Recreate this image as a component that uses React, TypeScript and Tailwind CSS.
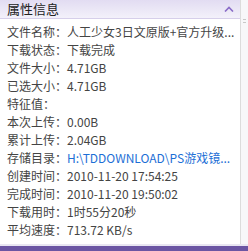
import React from "react";

const rows: { label: string; value: string; link?: boolean }[] = [
  { label: "文件名称：", value: "人工少女3日文原版+官方升级..." },
  { label: "下载状态：", value: "下载完成" },
  { label: "文件大小：", value: "4.71GB" },
  { label: "已选大小：", value: "4.71GB" },
  { label: "特征值：", value: "" },
  { label: "本次上传：", value: "0.00B" },
  { label: "累计上传：", value: "2.04GB" },
  { label: "存储目录：", value: "H:\\TDDOWNLOAD\\PS游戏镜...", link: true },
  { label: "创建时间：", value: "2010-11-20 17:54:25" },
  { label: "完成时间：", value: "2010-11-20 19:50:02" },
  { label: "下载用时：", value: "1时55分20秒" },
  { label: "平均速度：", value: "713.72 KB/s" },
];

export default function App() {
  return (
    <div
      className="w-[248px] h-[251px] bg-white flex flex-col overflow-hidden"
      style={{ fontFamily: '"Noto Sans CJK SC", "Noto Sans", sans-serif' }}
    >
      <div className="flex flex-1 min-h-0">
        <div className="w-[240px] flex flex-col">
          <div className="h-[19px] flex items-center justify-between pl-[7px] pr-[6px] bg-gradient-to-b from-[#e2dcf2] to-[#f3f1fa] border-b border-[#d6cfea]">
            <span className="text-[13px] text-[#222] leading-[18px]">属性信息</span>
            <svg width="10" height="6" viewBox="0 0 10 6">
              <path d="M1 5.5 L5 1.5 L9 5.5" fill="none" stroke="#8a6cc8" strokeWidth="1.6" />
            </svg>
          </div>
          <div className="flex flex-col pt-[4px] pl-[7px]">
            {rows.map((r) => (
              <div key={r.label} className="h-[18px] flex items-center text-[12px] leading-[18px] whitespace-nowrap">
                <span className="text-[#444] shrink-0">{r.label}</span>
                <span className={r.link ? "text-[#1d6fd6]" : "text-[#444]"}>{r.value}</span>
              </div>
            ))}
          </div>
        </div>
        <div className="w-[8px] border-l border-[#dcdcdc] bg-[#f7f7f9] flex flex-col">
          <div className="mt-[19px] ml-[2px] w-[3px] h-[1px] bg-[#c8c8c8]" />
          <div className="mt-[2px] ml-[2px] w-[3px] h-[1px] bg-[#c8c8c8]" />
        </div>
      </div>
      <div className="h-[2px] bg-[#e9e6f2]" />
      <div className="h-[5px] bg-[#6b55a3]" />
    </div>
  );
}
